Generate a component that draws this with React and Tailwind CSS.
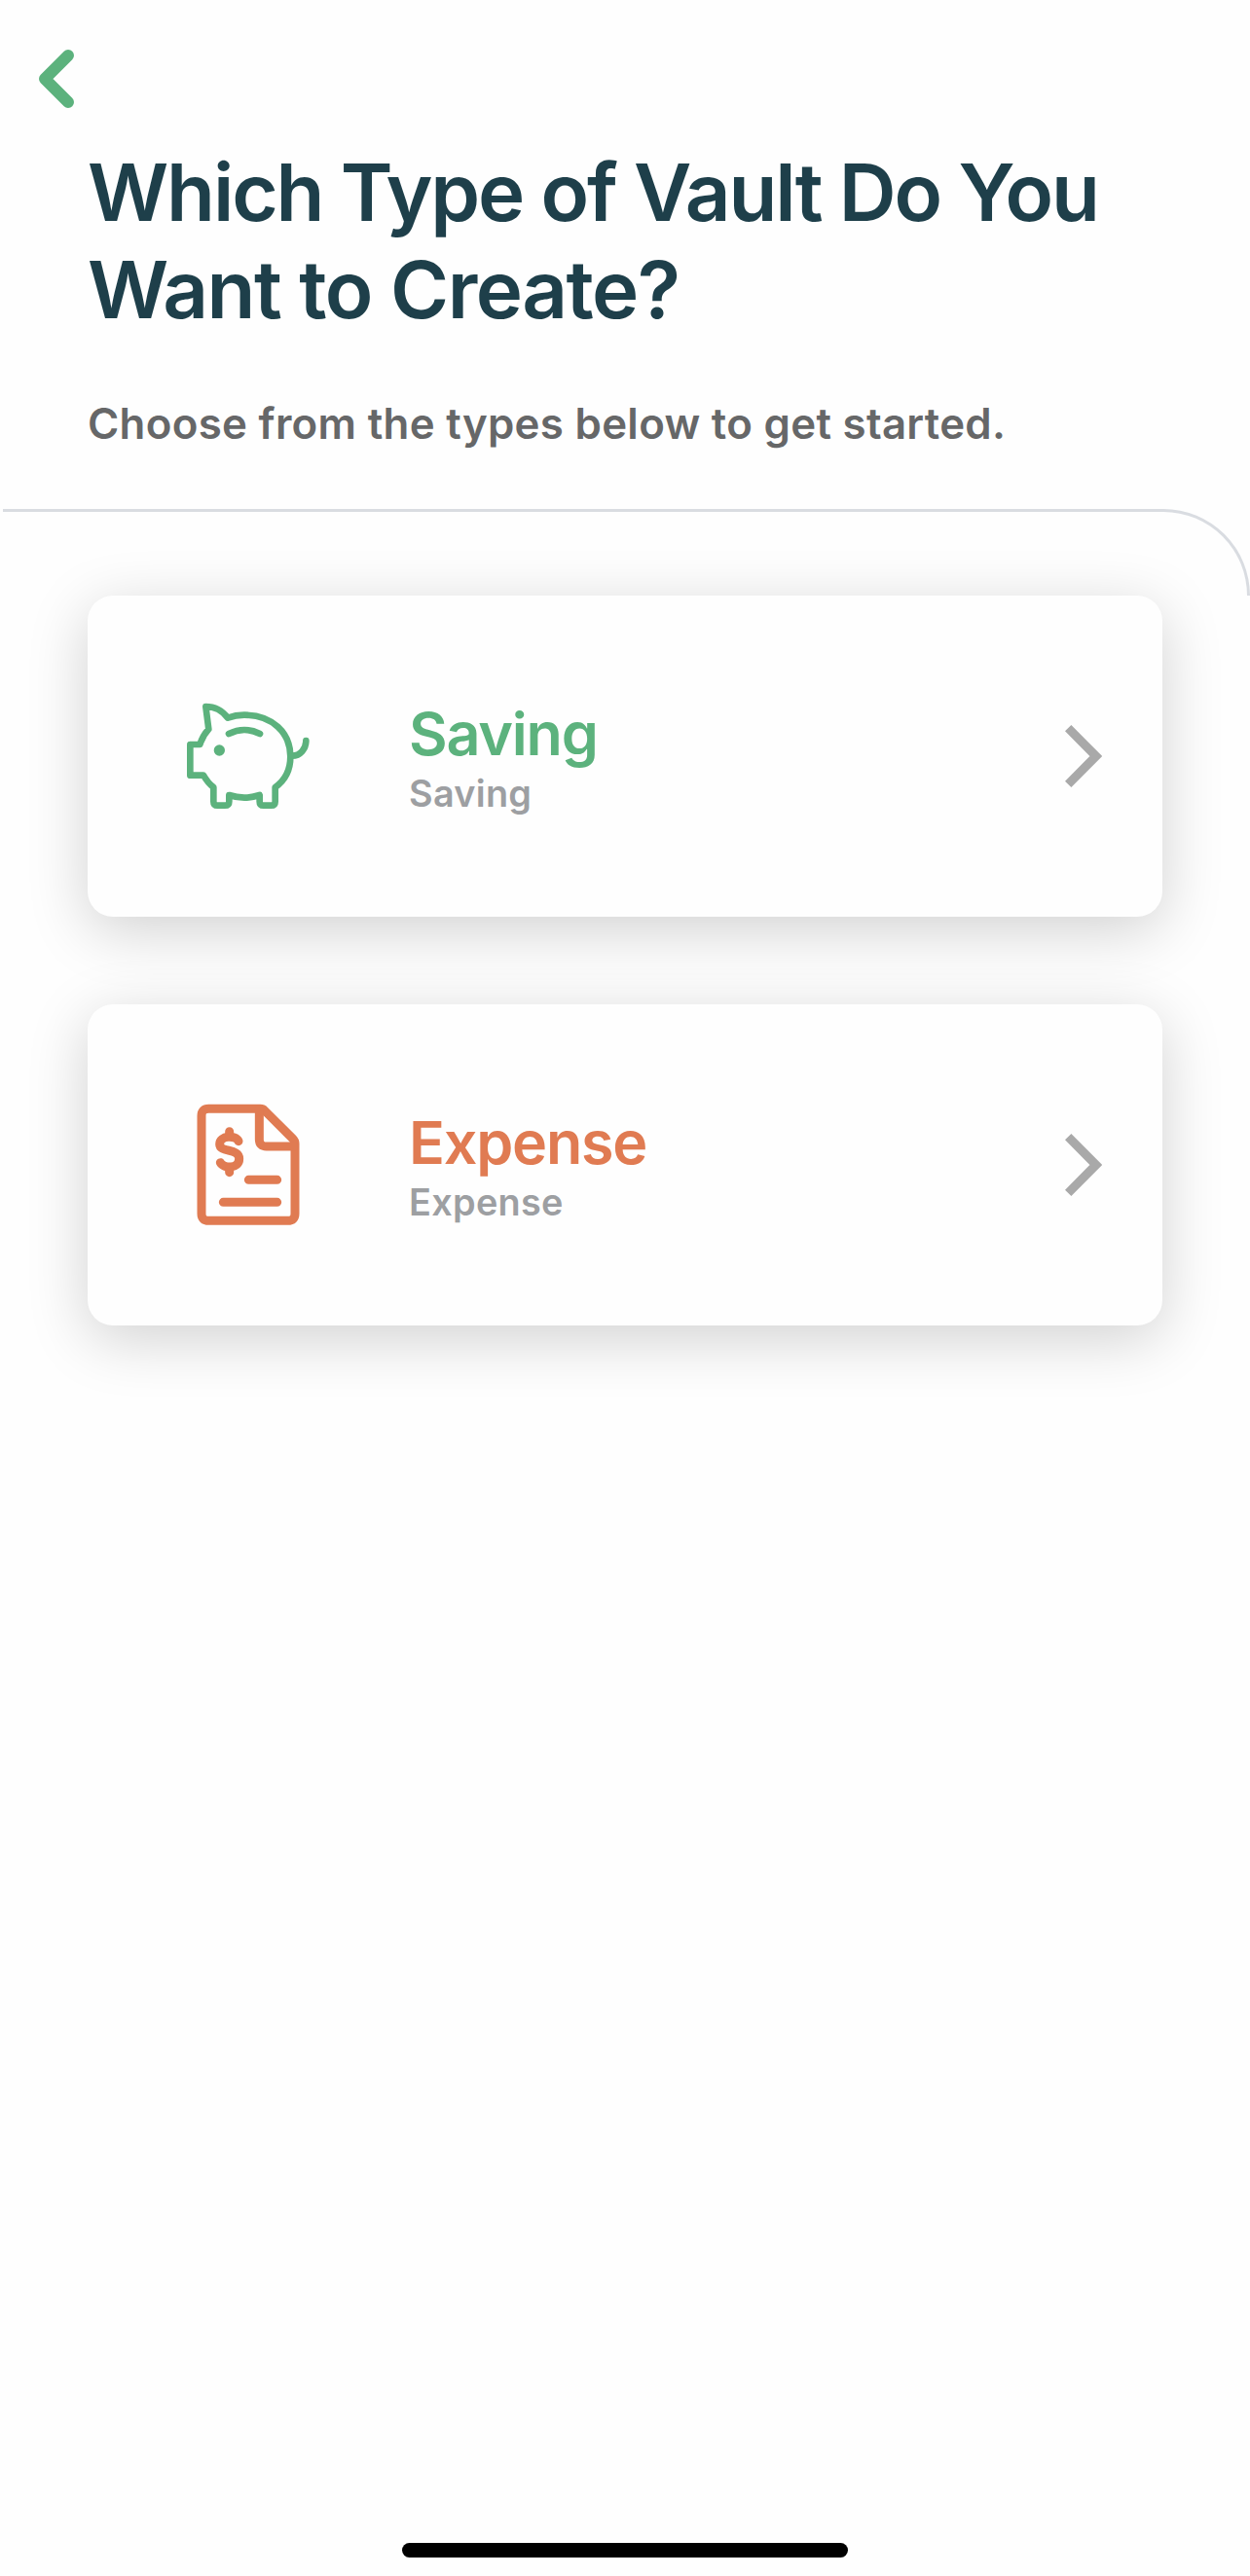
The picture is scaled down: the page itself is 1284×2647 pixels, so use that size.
const vaultTypes = [
  {
    name: 'Saving',
    caption: 'Saving',
    nameClass: 'text-[#5cb27d]',
    trackingClass: 'tracking-[-0.02em]',
    icon: PiggyIcon,
  },
  {
    name: 'Expense',
    caption: 'Expense',
    nameClass: 'text-[#e07b52]',
    trackingClass: 'tracking-[-0.02em]',
    icon: InvoiceIcon,
  },
];

function PiggyIcon() {
  return (
    <svg
      viewBox="0 6 510 450"
      className="h-[150px] w-[170px]"
      fill="none"
      stroke="#5cb27d"
      strokeWidth="20"
      strokeLinecap="round"
      strokeLinejoin="round"
    >
      <path d="M192 113C176 92 155 78 124 78L133 148C121 161 112 176 106 195H76V290H117C125 304 136 318 148 327V371Q148 383 160 383H183Q196 383 196 371V351Q243 367 290 351V371Q290 383 302 383H326Q338 383 338 371V327C371 304 385 268 385 232C385 158 328 104 243 104Q216 104 192 113Z" />
      <path d="M195 162Q243 138 291 162" />
      <path d="M390 230C416 230 433 208 433 183" />
      <circle cx="166" cy="213" r="17" fill="#5cb27d" stroke="none" />
    </svg>
  );
}

function InvoiceIcon() {
  return (
    <svg
      viewBox="0 6 450 510"
      className="h-[170px] w-[150px]"
      fill="none"
      stroke="#e07b52"
      strokeWidth="27"
      strokeLinecap="round"
      strokeLinejoin="round"
    >
      <path d="M103 88H262Q270 88 276 94L362 180Q369 187 369 196V411Q369 433 347 433H103Q81 433 81 411V110Q81 88 103 88Z" />
      <path d="M259 91V182Q259 204 281 204H366" />
      <path d="M226 307H314M148 376H314" />
      <path d="M195 188C186 168 137 170 137 197C137 224 197 209 197 242C197 274 149 273 139 254" />
      <path d="M167 158V168M167 272V284" />
    </svg>
  );
}

function VaultCard({ name, caption, nameClass, trackingClass, icon: Icon }) {
  return (
    <button
      type="button"
      className="flex h-[330px] w-full items-center rounded-[26px] bg-[#fefefe] text-left shadow-[0_14px_62px_rgba(0,0,0,0.18)]"
    >
      <span className="flex w-[330px] shrink-0 justify-center">
        <Icon />
      </span>
      <span className="flex flex-1 flex-col pt-0.5">
        <span className={`text-[61px] leading-[74px] font-semibold ${trackingClass} ${nameClass}`}>{name}</span>
        <span className="text-[37.8px] leading-12 font-semibold tracking-[0.008em] text-[#9d9fa2]">{caption}</span>
      </span>
      <svg viewBox="0 0 38 64" className="mr-[62px] h-16 w-[38px]" fill="none" stroke="#a9a9a9" strokeWidth="9">
        <path d="M3.2 3.2L31.8 32L3.2 60.8" />
      </svg>
    </button>
  );
}

export default function App() {
  return (
    <div className="flex h-[2647px] w-[1284px] flex-col overflow-hidden bg-[#fefefe] font-['Inter','Liberation_Sans',sans-serif]">
      <header className="h-[523px] px-[90px] pt-[51px]">
        <button type="button" aria-label="Back" className="-ml-[50px] block">
          <svg viewBox="0 0 36 60" className="h-[60px] w-9" fill="none" stroke="#5cb27d" strokeWidth="12" strokeLinecap="round" strokeLinejoin="round">
            <path d="M30 6L6 30L30 54" />
          </svg>
        </button>
        <h1 className="mt-[37px] text-[81.6px] leading-[100px] font-semibold whitespace-nowrap text-[#1e3f4a]">
          <span className="block tracking-[-0.0262em]">Which Type of Vault Do You</span>
          <span className="block tracking-[-0.0185em]">Want to Create?</span>
        </h1>
        <p className="mt-[61px] text-[43.8px] leading-[54px] font-semibold tracking-[0.007em] whitespace-nowrap text-[#666768]">
          Choose from the types below to get started.
        </p>
      </header>

      <div className="ml-[3px] h-[89px] rounded-tr-[90px] border-t-3 border-r-3 border-[#d9dce1]" />

      <main className="flex flex-1 flex-col gap-[90px] px-[90px]">
        {vaultTypes.map((type) => (
          <VaultCard key={type.name} {...type} />
        ))}
      </main>

      <div className="mx-auto mb-[19px] h-[15px] w-[458px] rounded-full bg-black" />
    </div>
  );
}
